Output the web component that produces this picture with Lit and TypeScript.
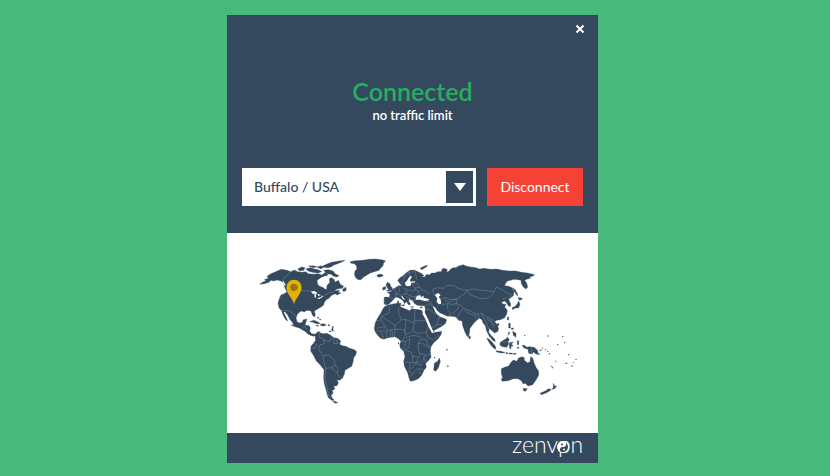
import { LitElement, html, svg, css } from "lit";
import { customElement, state } from "lit/decorators.js";

/* Continents, drawn on a 1113 x 600 canvas; each group is shifted to its place. */
const land = [
  {
    x: 84,
    y: 66,
    shapes: [
      // North America
      "M14 88L25 80L33 78L28 74L40 70L36 64L46 57L62 50L78 43L92 45L108 50L118 45L128 50L140 52L152 50L160 56L176 58L190 56L200 60L212 52L218 58L214 66L204 66L196 72L188 80L192 90L204 94L209 102L213 100L214 90L222 82L220 72L230 68L238 74L240 82L250 76L256 88L266 94L262 100L246 102L238 108L254 106L250 112L258 114L246 120L240 116L228 122L224 128L214 134L208 142L206 150L198 156L188 162L178 168L181 180L178 186L172 180L168 168L158 166L148 170L138 168L128 176L123 188L126 200L134 204L142 202L145 194L156 192L152 204L150 210L162 212L166 218L164 228L170 236L182 238L186 243L176 242L160 238L152 230L138 222L124 214L116 210L112 202L104 192L98 180L90 170L86 172L94 188L98 198L92 194L84 180L80 168L72 158L69 144L74 128L78 120L88 116L96 110L92 104L88 94L86 84L78 78L66 75L56 78L48 76L42 82L28 86Z",
      "M152 42L166 38L178 42L190 44L200 50L188 54L172 52L160 48Z",
      "M128 42L140 36L150 38L146 46L134 48Z",
      "M160 33L176 32L186 36L174 38Z",
      "M186 36L198 32L206 36L198 42Z",
      "M206 46L220 44L234 48L240 56L252 62L246 66L236 64L228 58L216 56Z",
      "M202 34L214 28L230 22L252 18L270 16L262 20L248 26L236 30L230 35L218 38L206 37Z",
      "M262 104L272 96L274 106L266 110Z",
      "M164 200L176 196L188 200L196 206L184 206L174 202Z",
      "M196 208L206 206L214 210L206 213L198 212Z",
      "M184 211L190 211L190 214L184 213Z",
      "M219 209L224 209L224 212L219 212Z",
      "M231 218h3v4h-3zM232 226h3v3h-3zM188 186h3v4h-3zM194 192h3v3h-3z",
      // Greenland
      "M286 20L300 17L322 16L342 13L362 12L384 15L392 18L386 23L384 32L378 38L372 46L358 50L346 54L336 60L326 66L318 74L310 74L302 68L298 58L300 48L306 42L304 32L298 26L286 24Z",
    ],
  },
  {
    x: 84,
    y: 276,
    shapes: [
      // Central and South America
      "M108 0L118 0L132 4L142 0L152 4L160 14L162 24L170 29L178 28L176 34L164 30L154 20L148 12L136 8L122 6Z",
      "M180 30L184 24L192 19L196 24L206 26L216 25L226 30L236 38L248 40L257 48L254 58L262 62L272 64L284 70L298 74L305 80L302 90L296 98L294 112L290 124L280 130L270 136L268 148L262 160L254 166L246 164L250 174L246 182L236 184L240 192L232 196L234 206L228 210L232 220L238 226L230 226L220 218L216 206L212 190L208 176L206 160L207 134L196 120L184 108L176 92L167 78L168 64L176 54L182 46Z",
      "M232 228L242 230L249 233L240 235Z",
      "M230 12h4v4h-4zM233 4h2v4h-2zM222 18h6v2h-6z",
    ],
  },
  {
    x: 369,
    y: 66,
    shapes: [
      // Europe and Asia
      "M143 76L150 68L160 62L168 54L180 46L192 45L204 50L216 56L222 62L214 66L224 66L230 58L238 60L244 54L256 54L262 50L274 50L276 42L284 40L292 44L290 52L298 48L302 42L310 38L318 38L326 33L340 29L350 34L362 36L378 38L388 42L402 40L420 43L440 42L458 46L478 48L498 48L514 52L532 54L554 59L548 64L538 66L542 70L532 72L524 76L530 84L533 96L528 102L520 96L514 86L513 76L504 74L492 73L482 76L472 78L466 86L464 92L476 94L486 98L492 110L490 122L480 130L476 134L482 146L482 154L476 154L470 144L464 138L454 142L460 148L468 148L464 156L472 166L470 178L464 188L452 194L440 196L434 200L442 210L446 222L442 230L434 234L424 226L418 220L416 232L424 242L434 252L436 260L428 256L418 244L410 228L406 212L398 202L396 194L388 190L380 196L370 206L360 220L358 236L353 246L346 234L338 212L336 198L326 196L318 186L306 184L290 183L280 178L268 174L256 162L250 156L256 170L264 180L272 180L280 188L290 194L286 206L272 216L256 224L246 230L240 216L230 194L223 178L226 164L224 152L212 152L200 150L192 144L188 136L178 132L176 138L182 148L176 150L168 138L158 124L152 122L158 132L170 138L164 146L158 136L146 128L138 126L132 132L124 140L116 148L108 150L102 146L102 130L104 126L118 127L120 118L112 112L122 110L130 102L140 96L146 92L156 92L150 86Z",
      "M108 108L116 104L112 98L108 90L112 82L120 86L122 94L128 100L126 106L116 108Z",
      "M98 98L106 94L108 100L102 106L98 104Z",
      "M80 62L86 58L96 58L100 62L92 66L84 66Z",
      "M210 40L222 34L232 30L230 35L222 40L216 44Z",
      "M155 150L164 149L162 153L156 152ZM142 138h4v9h-4zM182 155h8v2h-8zM210 156h7v2h-7z",
      "M488 98L496 104L502 116L504 124L498 118L492 108Z",
      "M504 128L512 128L518 132L508 136Z",
      "M506 138L510 148L506 158L494 160L488 164L486 158L496 154L502 146Z",
      "M472 186h4v9h-4zM440 206h7v5h-7z",
      "M356 240L362 246L360 252L356 250Z",
    ],
  },
  {
    x: 414,
    y: 201,
    shapes: [
      // Africa
      "M58 20L70 15L84 12L98 10L108 10L106 20L114 24L124 28L134 32L140 26L152 28L168 30L174 36L182 54L190 70L196 84L206 94L218 96L230 94L228 104L218 118L206 128L198 140L196 152L198 172L190 182L182 190L184 202L176 212L170 226L160 236L146 242L136 244L132 234L128 218L118 198L116 184L120 170L116 154L106 144L104 134L108 124L100 116L90 110L78 112L66 114L56 118L46 114L38 106L30 94L28 84L31 68L38 54L46 42L52 30Z",
      "M223 174L226 184L220 204L212 214L206 210L208 190L218 184Z",
      "M244 148h3v3h-3zM247 197h3v3h-3zM207 172h3v2h-3zM99 128h3v3h-3z",
    ],
  },
  {
    x: 729,
    y: 231,
    shapes: [
      // Oceania
      "M50 84L58 88L68 98L76 108L78 118L70 114L60 102Z",
      "M78 122L94 124L106 128L94 129L80 126ZM108 128h6v3h-6zM117 129h10v3h-10zM130 130h8v3h-8z",
      "M90 98L98 92L106 88L112 82L118 88L114 96L116 102L110 112L98 110L90 106Z",
      "M118 98L130 96L124 102L130 108L124 108L122 118L118 112Z",
      "M116 40h5v14h-5zM124 54h6v4h-6zM128 64L138 70L138 82L130 76ZM116 66L120 68L114 76ZM142 92h4v12h-4zM142 112h5v3h-5z",
      "M156 106L164 106L170 112L178 110L192 112L202 120L204 128L210 134L198 132L190 126L186 132L176 130L174 118L162 114Z",
      // Australia, Tasmania and New Zealand
      "M94 176L104 172L116 168L122 158L130 150L140 154L146 144L156 140L164 144L162 150L172 158L180 156L182 140L188 144L192 158L198 172L206 184L206 196L198 210L188 224L174 228L166 220L160 222L154 212L144 206L130 206L114 212L96 214L94 206L98 204L94 190Z",
      "M160 235L172 236L166 244L160 242Z",
      "M250 220L254 228L260 228L254 236L246 238L250 232Z",
      "M244 238L238 244L226 250L214 254L210 250L224 244L236 236Z",
    ],
  },
];

/* Atolls and other small islands, drawn lighter. */
const islets =
  "M206 122L218 116L212 124ZM214 110L220 114L218 117ZM224 118h5v3h-5zM231 123h4v3h-4zM236 129h4v4h-4zM240 164L250 172L248 176ZM162 75h4v3h-4zM232 76h4v4h-4zM261 102h4v4h-4zM276 78h4v4h-4zM282 96h4v4h-4zM294 132h4v4h-4zM286 158h6v4h-6zM304 166h4v4h-4zM316 146h4v4h-4zM256 152h3v5h-3zM308 156h3v3h-3z";

/* Inland seas and lakes, in the canvas colour. */
const water = [
  {
    x: 84,
    y: 66,
    shapes: [
      "M168 110L178 108L188 114L182 116L172 116ZM178 118L184 116L182 128L179 128ZM188 116L196 120L190 124ZM186 130L198 126L202 122L204 125L192 132Z",
      "M84 76L88 84L92 90L89 92L84 84Z",
      "M187 76L198 68L212 62L222 68L224 82L215 92L214 104L207 98L192 92L188 86Z",
    ],
  },
  {
    x: 369,
    y: 66,
    shapes: [
      "M168 92L164 84L172 76L176 68L182 62L186 66L180 74L182 80L196 78L194 82L184 84L182 92L174 94Z",
      "M196 134L200 124L210 120L214 126L222 122L220 128L236 132L238 136L224 138L210 134Z",
      "M254 120L264 114L272 120L266 126L272 134L274 146L266 148L260 140L262 130Z",
      "M218 168L224 172L234 192L244 216L250 230L258 228L272 220L270 226L256 232L246 234L236 216L226 192L218 178Z",
      "M248 152L256 158L262 168L272 176L284 182L288 190L280 188L268 184L258 174Z",
    ],
  },
];

const borders = [
  {
    x: 84,
    y: 66,
    lines: [
      "M110 46L82 76L92 90",
      "M98 106L168 108L190 118L206 124L222 112L234 112",
      "M80 166L104 168L116 176L126 188",
      "M140 220L148 214L156 222",
    ],
  },
  {
    x: 84,
    y: 276,
    lines: [
      "M192 22L194 38L206 42L208 56L194 60L190 72L204 92L222 90L238 106L240 118L250 134L246 144L256 160",
      "M206 46L224 50L230 38M238 40L236 56L254 54M246 42L246 54M170 70L180 68L186 60L176 54",
      "M204 92L206 110L212 130L230 128L240 120M230 128L236 136L248 142",
      "M212 130L210 160L216 186L220 210L230 222",
    ],
  },
  {
    x: 369,
    y: 66,
    lines: [
      "M154 86L160 72L176 52L196 50L200 74M180 64L176 52",
      "M104 130L106 146M118 127L134 132M134 104L138 118L134 130M146 96L150 108L138 118L156 120L168 116L170 104L158 98",
      "M170 104L184 108L196 104L206 108L204 120L192 126L180 122L168 116M180 122L178 134M186 90L196 98L196 104M196 98L210 96L216 106L230 110L238 118",
      "M188 86L202 86L206 96M192 126L202 128M166 122L174 130L184 138L194 134M222 138L240 140L248 150M226 152L240 146",
      "M252 118L248 104L262 98L282 100L290 92L312 92L324 100L340 104L352 106L370 102L396 106L418 108L432 112L438 96L458 104L470 114L484 118L476 132",
      "M352 106L356 116L372 124L396 132L418 128L430 116",
      "M350 106L342 118L332 124L322 132L310 134M262 130L280 130L296 142L308 134L322 134L318 146L332 150L340 160L362 168L382 178L396 174L404 182",
      "M282 126L296 132L308 134M274 150L292 146L306 148L320 146M292 148L294 166L302 174L298 184M306 176L320 166L326 154M322 188L330 172L340 160",
      "M344 166L354 174L374 180L378 192M382 178L388 190M396 176L402 192L410 204L416 222M410 192L424 202L432 218M418 192L436 214M406 186L420 190L434 198",
      "M226 160L240 164L258 180M240 146L250 160M244 220L260 210L276 208M260 210L268 186L280 188M456 132L470 128",
    ],
  },
  {
    x: 414,
    y: 201,
    lines: [
      "M32 62L48 60L48 50L74 38L72 20M48 60L60 80L36 84M50 50L90 76L110 60L102 44L100 24L106 20",
      "M110 60L122 58L148 70L148 62L150 28M150 62L182 62M148 70L144 88L152 98L166 100L184 96L190 78L204 92M122 58L122 82L118 98",
      "M60 80L66 92L78 90L90 88L118 88M90 76L90 90L88 110M66 92L64 112M78 90L76 112M82 94L84 110M46 94L52 104L56 116M36 92L46 94L58 92L64 100",
      "M118 88L122 104L112 124M122 104L144 94M124 112L146 106L166 110L172 118L186 120L186 134L198 142M184 96L188 112L206 120L222 104",
      "M108 124L122 124L134 116M122 124L118 140L112 148M134 116L132 142L118 150L138 156L142 168L160 172L166 166L160 150L160 130L168 118",
      "M118 186L144 188L154 188L160 172M160 130L176 132L196 146M166 160L184 166L198 160M154 188L174 184L176 172L184 166M142 168L144 188",
      "M134 188L134 216L144 222L158 206L174 208M138 206L152 190L166 196L174 190M134 230L144 222M170 222L162 218L166 212M176 172L182 186",
    ],
  },
  { x: 729, y: 231, lines: ["M184 110L184 130M98 98L112 94"] },
];

const servers = ["Buffalo / USA", "London / UK", "Frankfurt / Germany", "Sydney / Australia"];

@customElement("world-map")
class WorldMap extends LitElement {
  static styles = css`
    :host {
      display: block;
      background: #fff;
    }
    svg {
      display: block;
      width: 100%;
      height: auto;
    }
    .land {
      fill: #34495e;
      stroke: #34495e;
      stroke-width: 1;
      stroke-linejoin: round;
    }
    .islets {
      fill: #66778a;
    }
    .water {
      fill: #fff;
    }
    .border {
      fill: none;
      stroke: #8492a0;
      stroke-width: 1.4;
      stroke-linejoin: round;
    }
    .pin {
      fill: #e2b007;
    }
    .pin-eye {
      fill: #967608;
    }
  `;

  render() {
    return html`
      <svg viewBox="0 0 1113 600" role="img" aria-label="World map">
        ${land.map(
          (g) => svg`<g class="land" transform="translate(${g.x} ${g.y})">
            ${g.shapes.map((d) => svg`<path d=${d}></path>`)}</g>`
        )}
        <path class="islets" transform="translate(729 231)" d=${islets}></path>
        ${borders.map(
          (g) => svg`<g class="border" transform="translate(${g.x} ${g.y})">
            ${g.lines.map((d) => svg`<path d=${d}></path>`)}</g>`
        )}
        ${water.map(
          (g) => svg`<g class="water" transform="translate(${g.x} ${g.y})">
            ${g.shapes.map((d) => svg`<path d=${d}></path>`)}</g>`
        )}
        <path class="pin" d="M201 213C196 195 178 182 178 163A23 23 0 0 1 224 163C224 182 206 195 201 213Z"></path>
        <circle class="pin-eye" cx="201" cy="163" r="11"></circle>
      </svg>
    `;
  }
}

@customElement("app-root")
class AppRoot extends LitElement {
  static styles = css`
    :host {
      display: flex;
      justify-content: center;
      align-items: flex-start;
      box-sizing: border-box;
      min-height: 100vh;
      padding: 15px 5px 13px 0;
      background: #48b97a;
      font-family: Lato, "Liberation Sans", sans-serif;
      color: #fff;
    }
    .card {
      width: 371px;
      max-width: 100%;
      background: #34495e;
    }
    .bar {
      display: flex;
      justify-content: flex-end;
      padding: 6px 10px 0;
    }
    .close {
      display: grid;
      place-items: center;
      width: 16px;
      height: 16px;
      padding: 0;
      border: 0;
      background: none;
      color: inherit;
      cursor: pointer;
    }
    .status {
      padding: 38px 0 44px;
      text-align: center;
    }
    .state {
      margin: 0;
      font-size: 25px;
      font-weight: 600;
      line-height: 32px;
      color: #27ae60;
    }
    .limit {
      margin: 0;
      font-size: 13px;
      font-weight: 600;
      line-height: 17px;
    }
    .controls {
      display: flex;
      gap: 11px;
      padding: 0 15px 27px;
    }
    .picker {
      display: grid;
      grid-template-columns: 1fr 33px;
      flex: 1;
      min-width: 0;
      height: 38px;
      background: #fff;
    }
    .server {
      grid-area: 1 / 1 / 2 / 3;
      appearance: none;
      width: 100%;
      padding: 0 36px 1px 12px;
      border: 0;
      border-radius: 0;
      background: none;
      font: 500 14px Lato, "Liberation Sans", sans-serif;
      color: #34495e;
    }
    .arrow {
      grid-area: 1 / 2;
      display: grid;
      place-items: center;
      margin: 3px;
      background: #34495e;
      pointer-events: none;
    }
    .action {
      width: 96px;
      padding: 0 0 1px;
      border: 0;
      background: #f44336;
      font: 400 14px Lato, "Liberation Sans", sans-serif;
      color: #fff;
      cursor: pointer;
    }
    .foot {
      display: flex;
      justify-content: flex-end;
      align-items: flex-end;
      height: 30px;
      padding-right: 10px;
    }
    .logo {
      flex: none;
    }
    .brand {
      font: 300 23px Lato, "Liberation Sans", sans-serif;
      fill: #fff;
    }
    .disc {
      fill: #fff;
    }
    .dark {
      fill: #34495e;
    }
  `;

  @state() server = servers[0];
  @state() connected = true;

  render() {
    return html`
      <main class="card">
        <div class="bar">
          <button class="close" aria-label="Close">
            <svg width="10" height="10" viewBox="0 0 10 10" aria-hidden="true">
              <path d="M1.5 1.5L8.5 8.5M8.5 1.5L1.5 8.5" stroke="currentColor" stroke-width="2"></path>
            </svg>
          </button>
        </div>
        <header class="status">
          <h1 class="state">${this.connected ? "Connected" : "Disconnected"}</h1>
          <p class="limit">no traffic limit</p>
        </header>
        <div class="controls">
          <div class="picker">
            <select
              class="server"
              aria-label="Server"
              @change=${(e: Event) => (this.server = (e.target as HTMLSelectElement).value)}
            >
              ${servers.map((s) => html`<option ?selected=${s === this.server}>${s}</option>`)}
            </select>
            <span class="arrow">
              <svg width="12" height="8" viewBox="0 0 12 8" aria-hidden="true">
                <path d="M0 0H12L6 8Z" fill="#fff"></path>
              </svg>
            </span>
          </div>
          <button class="action" @click=${() => (this.connected = !this.connected)}>
            ${this.connected ? "Disconnect" : "Connect"}
          </button>
        </div>
        <world-map></world-map>
        <footer class="foot">
          <svg class="logo" width="80" height="36" viewBox="0 0 80 36" role="img" aria-label="zenvpn">
            <text class="brand" x="4" y="26">zenvpn</text>
            <circle class="disc" cx="55" cy="20" r="6"></circle>
            <path class="dark" d="M56 15A5.1 5.1 0 0 1 54 25A2.5 2.5 0 0 1 55 20A2.5 2.5 0 0 0 56 15Z"></path>
            <circle class="dark" cx="54" cy="17.5" r="1"></circle>
            <circle class="disc" cx="56" cy="22.5" r="1"></circle>
          </svg>
        </footer>
      </main>
    `;
  }
}
